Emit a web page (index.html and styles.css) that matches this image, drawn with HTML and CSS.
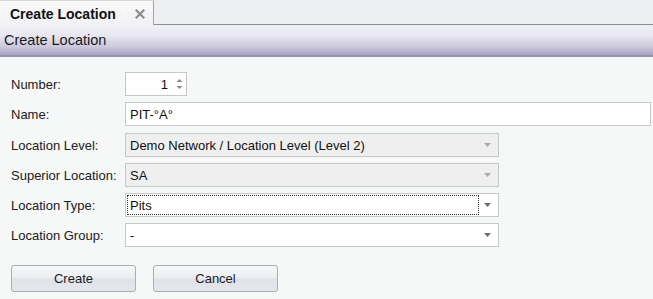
FILE: index.html
```html
<!DOCTYPE html>
<html>
<head>
<meta charset="utf-8">
<link rel="stylesheet" href="styles.css">
</head>
<body>
<div class="app">
  <div class="tabstrip">
    <div class="tab">
      <span class="tab-title">Create Location</span>
      <span class="tab-close">
        <svg width="10" height="10" viewBox="0 0 10 10"><path d="M1.5 1.5 L8.5 8.5 M8.5 1.5 L1.5 8.5" stroke="#8e8e8e" stroke-width="2.2" stroke-linecap="square"/></svg>
      </span>
    </div>
    <div class="tab-fill"></div>
  </div>
  <div class="header">Create Location</div>
  <div class="form">
    <div class="row">
      <label class="lbl">Number:</label>
      <div class="field spin">
        <span class="spin-val">1</span>
        <span class="spin-btns">
          <svg width="7" height="14" viewBox="0 0 7 14"><path d="M0.5 5 L3.5 2 L6.5 5 Z" fill="#8a8a8a"/><path d="M0.5 9 L3.5 12 L6.5 9 Z" fill="#8a8a8a"/></svg>
        </span>
      </div>
    </div>
    <div class="row">
      <label class="lbl">Name:</label>
      <div class="field text wide">PIT-°A°</div>
    </div>
    <div class="row r3">
      <label class="lbl">Location Level:</label>
      <div class="field combo disabled"><span class="val">Demo Network / Location Level (Level 2)</span><span class="arrow"><svg width="7" height="4" viewBox="0 0 7 4"><path d="M0 0 L7 0 L3.5 4 Z" fill="#a9a9a9"/></svg></span></div>
    </div>
    <div class="row">
      <label class="lbl">Superior Location:</label>
      <div class="field combo disabled"><span class="val">SA</span><span class="arrow"><svg width="7" height="4" viewBox="0 0 7 4"><path d="M0 0 L7 0 L3.5 4 Z" fill="#a9a9a9"/></svg></span></div>
    </div>
    <div class="row">
      <label class="lbl">Location Type:</label>
      <div class="field combo"><span class="val focus">Pits</span><span class="arrow"><svg width="7" height="4" viewBox="0 0 7 4"><path d="M0 0 L7 0 L3.5 4 Z" fill="#6f6f6f"/></svg></span></div>
    </div>
    <div class="row">
      <label class="lbl">Location Group:</label>
      <div class="field combo"><span class="val">-</span><span class="arrow"><svg width="7" height="4" viewBox="0 0 7 4"><path d="M0 0 L7 0 L3.5 4 Z" fill="#6f6f6f"/></svg></span></div>
    </div>
    <div class="buttons">
      <button class="btn">Create</button>
      <button class="btn">Cancel</button>
    </div>
  </div>
</div>
</body>
</html>
```

FILE: styles.css
```css
* { box-sizing: border-box; }
html, body { margin: 0; padding: 0; }
body {
  width: 653px;
  height: 299px;
  overflow: hidden;
  background: #f6f7f7;
  font-family: "Liberation Sans", Arial, sans-serif;
  font-size: 13px;
  color: #1e1e1e;
}
.tabstrip {
  display: flex;
  height: 25px;
  background: #eeeff1;
}
.tab {
  width: 154px;
  height: 25px;
  display: flex;
  align-items: center;
  justify-content: space-between;
  padding: 1px 8px 0 10px;
  background: linear-gradient(#fafafa, #f1f1f5);
  border-right: 1px solid #a2a2a8;
  border-top: 1px solid #d6d6da;
}
.tab-title {
  font-weight: bold;
  font-size: 14px;
  color: #111;
}
.tab-close { display: flex; }
.tab-fill {
  flex: 1;
  border-bottom: 1px solid #8d8d98;
}
.header {
  height: 32px;
  padding: 0 0 0 4px;
  display: flex;
  align-items: center;
  font-size: 14.5px;
  color: #1a1a1a;
  background: linear-gradient(#f0f0f7 0%, #e8e7f1 35%, #c9c6da 75%, #a7a3c3 100%);
  border-bottom: 2px solid #9892b2;
}
.form {
  padding: 15px 0 0 11px;
}
.row {
  display: flex;
  align-items: center;
  height: 24px;
  margin-bottom: 6px;
}
.row.r3 { margin-top: 7px; }
.lbl {
  width: 114px;
  color: #202020;
}
.field {
  height: 24px;
  border: 1px solid #c4c8cc;
  background: #fff;
  display: flex;
  align-items: center;
  color: #111;
}
.spin {
  width: 62px;
  justify-content: flex-end;
  padding-right: 3px;
}
.spin-val { margin-right: 8px; }
.spin-btns { display: flex; }
.text {
  padding-left: 4px;
}
.wide { width: 526px; }
.combo {
  width: 374px;
  padding: 2px;
}
.combo .val {
  flex: 1;
  height: 18px;
  display: flex;
  align-items: center;
  padding-left: 2px;
}
.combo .val.focus {
  outline: 1px dotted #333;
  outline-offset: 0;
}
.combo .arrow {
  width: 18px;
  display: flex;
  justify-content: center;
  align-items: center;
}
.disabled {
  background: #efeff0;
}
.buttons {
  display: flex;
  gap: 17px;
  margin-top: 18px;
}
.btn {
  width: 125px;
  height: 27px;
  font-family: inherit;
  font-size: 13px;
  color: #1a1a2a;
  border: 1px solid #a9aeb4;
  border-radius: 3px;
  background: linear-gradient(#f7f8f9 0%, #eceef1 45%, #dfe3e7 55%, #e4e7ea 100%);
  padding: 0;
}
```
